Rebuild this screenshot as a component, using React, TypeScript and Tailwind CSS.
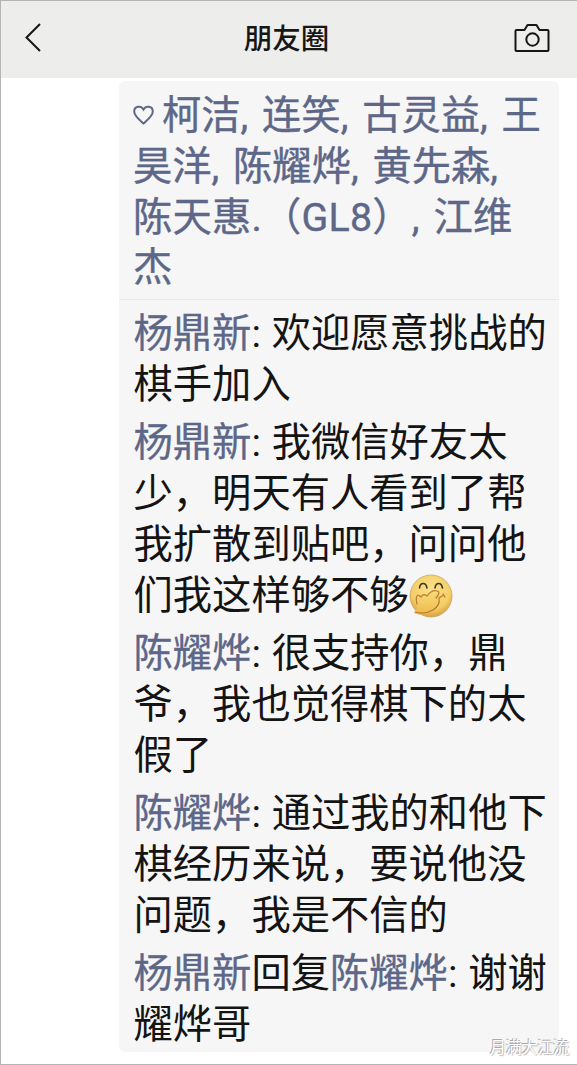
import React from "react";

const likes = [
  { text: "柯洁, 连笑, 古灵益, 王" },
  { text: "昊洋, 陈耀烨, 黄先森," },
  { text: "陈天惠.（GL8）, 江维", className: "tracking-[0.200px]" },
  { text: "杰" },
];

const comments = [
  { author: "杨鼎新", lines: ["欢迎愿意挑战的", "棋手加入"] },
  {
    author: "杨鼎新",
    lines: ["我微信好友太", "少，明天有人看到了帮", "我扩散到贴吧，问问他", "们我这样够不够"],
    emoji: true,
  },
  { author: "陈耀烨", lines: ["很支持你，鼎", "爷，我也觉得棋下的太", "假了"] },
  { author: "陈耀烨", lines: ["通过我的和他下", "棋经历来说，要说他没", "问题，我是不信的"] },
  { author: "杨鼎新", replyTo: "陈耀烨", lines: ["谢谢", "耀烨哥"] },
];

function Giggle() {
  return (
    <svg width="44" height="44" viewBox="0 0 44 44" className="inline-block align-[-9px]">
      <defs>
        <radialGradient id="face" cx="50%" cy="35%" r="65%">
          <stop offset="0" stopColor="#fbe18a" />
          <stop offset="0.7" stopColor="#f4cf68" />
          <stop offset="1" stopColor="#d9a03c" />
        </radialGradient>
        <linearGradient id="hand" x1="0" y1="0" x2="0" y2="1">
          <stop offset="0" stopColor="#fbdc7c" />
          <stop offset="1" stopColor="#edb94c" />
        </linearGradient>
      </defs>
      <circle cx="22" cy="22" r="21" fill="url(#face)" stroke="#c9a467" strokeWidth="0.8" />
      <path d="M10.500 14c.7-6 6.500-6 7.500 0M26 14c.8-6 6.500-6 7.500 0" fill="none" stroke="#443622" strokeWidth="1.600" strokeLinecap="round" />
      <path
        d="M5 39c4-4 4-7 3-11-1-4-1-6 1-7 1 0 2 1 3 2 2-3 4-3 6-1 3-4 7-6 11-6 4 1 3 4 0 8 2 4 0 10-5 13-5 4-13 5-19 2z"
        fill="url(#hand)"
      />
      <path
        d="M8 30c-1-4-1-8 1-9 1 0 2 1 3 2 2-3 4-3 6-1 3-4 7-6 10-5 3 0 2 4-1 7M35 21c-2 1-4 2-5 3 1 5-1 9-6 12-5 3-11 4-18 2M34 20l2 3"
        fill="none"
        stroke="#b87a2c"
        strokeWidth="1.200"
        strokeLinecap="round"
      />
    </svg>
  );
}

export default function App() {
  return (
    <div className="relative flex h-[1065px] w-[577px] flex-col overflow-hidden border-t border-b border-l border-[#b5b5b8] bg-white font-['Noto_Sans_CJK_SC',sans-serif]">
      {/* Header */}
      <header className="flex h-[77px] shrink-0 items-center justify-between bg-[#ededec] pr-[27px] pb-1 pl-[22px] text-[#161616]">
        <svg width="36" height="30" viewBox="0 0 36 30" fill="none" stroke="currentColor" strokeWidth="2">
          <path d="M17 1 3.500 14.500 17 28" />
        </svg>
        <h1 className="text-[28.500px] leading-none font-medium">朋友圈</h1>
        <svg width="36" height="30" viewBox="0 0 36 30" fill="none" stroke="currentColor" strokeWidth="2" strokeLinejoin="round">
          <path d="M2.500 7h8l3-5h9l3 5h8q1 0 1 1v19q0 1-1 1h-31q-1 0-1-1V8q0-1 1-1z" />
          <circle cx="18.500" cy="16.500" r="6.200" />
        </svg>
      </header>

      {/* Likes and comments */}
      <main className="mt-[3px] ml-[118px] h-[971px] w-[440px] rounded-md bg-[#f6f6f7] font-[Roboto,'Noto_Sans_CJK_SC',sans-serif] text-[39.300px] leading-[50.800px] whitespace-nowrap text-[#141414]">
        <div className="h-[219px] border-b border-[#eaeaea] pt-[10px] pl-[14px] text-[#5d6788] [-webkit-text-stroke:0.4px]">
          {likes.map(({ text, className = "" }, i) => (
            <p key={text} className={`[word-spacing:4px] ${className}`}>
              {i === 0 && (
                <svg width="21" height="20" viewBox="0 0 21 20" className="mr-[8px] inline-block align-[4px]" fill="none" stroke="currentColor" strokeWidth="2">
                  <path d="M10.500 18.500C6 14.500 1.200 11 1.200 6.500 1.200 1 8 0 10.500 4.500 13 0 19.800 1 19.800 6.500c0 4.500-4.800 8-9.300 12z" />
                </svg>
              )}
              {text}
            </p>
          ))}
        </div>
        <div className="flex flex-col gap-[7.600px] pt-[9px] pl-[14.500px]">
          {comments.map((comment, i) => (
            <div key={i}>
              {comment.lines.map((line, j) => (
                <p key={line} className="[word-spacing:1px]">
                  {j === 0 && (
                    <>
                      <span className="text-[#5d6788] [-webkit-text-stroke:0.3px]">{comment.author}</span>
                      {comment.replyTo && (
                        <>
                          回复<span className="text-[#5d6788] [-webkit-text-stroke:0.3px]">{comment.replyTo}</span>
                        </>
                      )}
                      {": "}
                    </>
                  )}
                  {line}
                  {comment.emoji && j === comment.lines.length - 1 && <Giggle />}
                </p>
              ))}
            </div>
          ))}
        </div>
      </main>

      {/* Watermark */}
      <span className="absolute right-[8px] bottom-[7px] text-[15.800px] leading-5 text-white [text-shadow:-1px_-1px_0_#aaa,1px_1px_1px_#bbb]">
        月满大江流
      </span>
    </div>
  );
}
